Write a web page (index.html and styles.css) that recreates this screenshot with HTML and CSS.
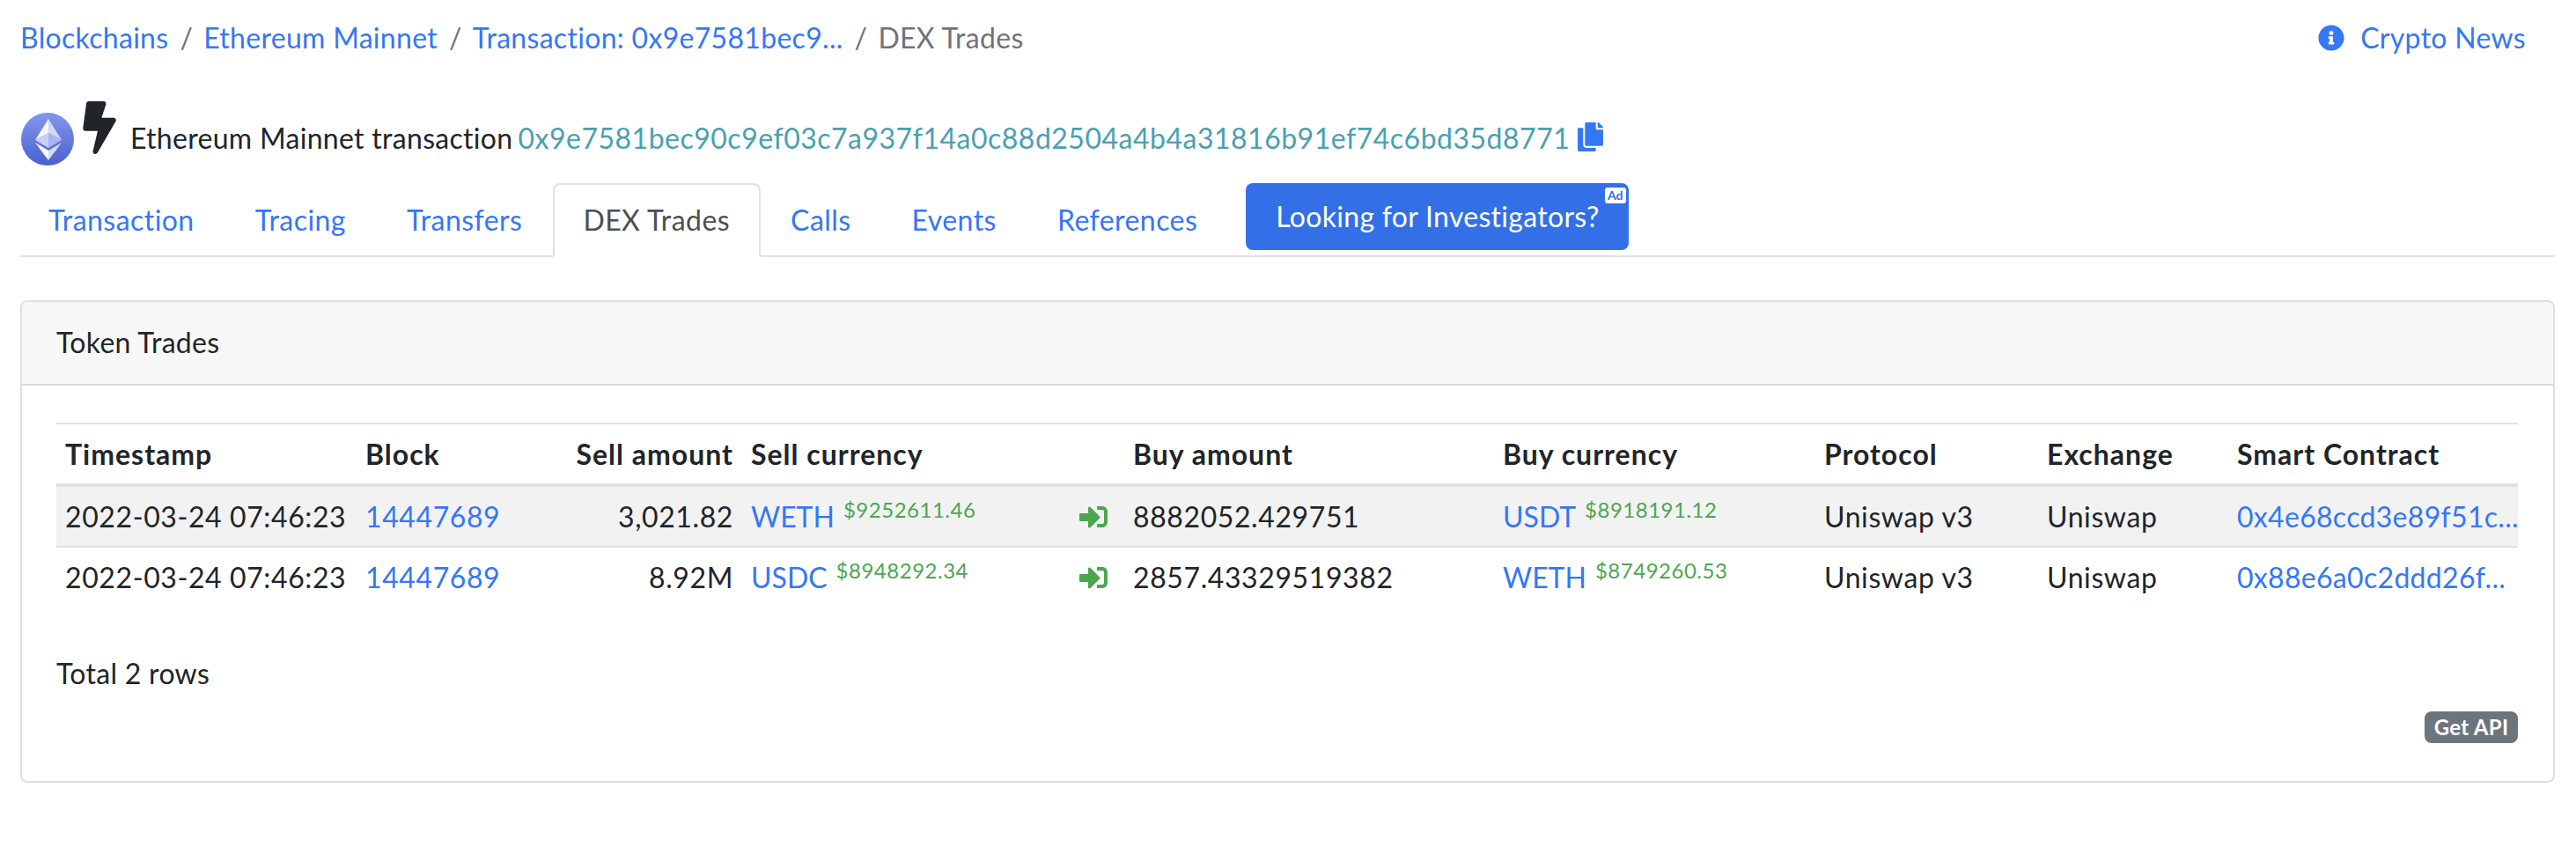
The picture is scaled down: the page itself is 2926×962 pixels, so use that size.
FILE: index.html
```html
<!DOCTYPE html>
<html>
<head>
  <meta charset="utf-8">
  <title>DEX Trades</title>
  <link rel="stylesheet" href="styles.css">
</head>
<body>
  <div class="top-row">
    <div class="breadcrumb">
      <a href="#">Blockchains</a><span class="sep">/</span><a href="#">Ethereum Mainnet</a><span class="sep">/</span><a href="#">Transaction: 0x9e7581bec9...</a><span class="sep">/</span><span class="current">DEX Trades</span>
    </div>
    <a class="news" href="#">
      <svg class="news-icon" viewBox="0 0 512 512"><path d="M256 8C119.043 8 8 119.083 8 256c0 136.997 111.043 248 248 248s248-111.003 248-248C504 119.083 392.957 8 256 8zm0 110c23.196 0 42 18.804 42 42s-18.804 42-42 42-42-18.804-42-42 18.804-42 42-42zm56 254c0 6.627-5.373 12-12 12h-88c-6.627 0-12-5.373-12-12v-24c0-6.627 5.373-12 12-12h12v-64h-12c-6.627 0-12-5.373-12-12v-24c0-6.627 5.373-12 12-12h64c6.627 0 12 5.373 12 12v100h12c6.627 0 12 5.373 12 12v24z"/></svg>
      <span>Crypto News</span>
    </a>
  </div>

  <div class="title">
    <svg class="eth-icon" viewBox="0 0 60 60">
      <defs>
        <linearGradient id="eth-bg" x1="0" y1="0" x2="0" y2="1">
          <stop offset="0" stop-color="#8497ec"/>
          <stop offset="1" stop-color="#4a5fd0"/>
        </linearGradient>
      </defs>
      <circle cx="30" cy="30" r="30" fill="url(#eth-bg)"/>
      <polygon points="31,7 16,31 31,23" fill="#f4f6fe"/>
      <polygon points="31,7 46,31 31,23" fill="#cfd6f7"/>
      <polygon points="16,31 31,23 31,40" fill="#c9d1f6"/>
      <polygon points="46,31 31,23 31,40" fill="#a9b5f0"/>
      <polygon points="16,34 31,43 31,54" fill="#fbfcff"/>
      <polygon points="46,34 31,43 31,54" fill="#d5dbf8"/>
    </svg>
    <svg class="bolt-icon" viewBox="0 0 320 512"><path d="M296 160H180.6l42.6-129.8C227.2 15 215.7 0 200 0H56C44 0 33.8 8.9 32.2 20.8l-32 240C-1.7 275.2 9.5 288 24 288h118.7L96.6 482.5c-3.6 15.2 8 29.5 23.3 29.5 8.4 0 16.4-4.4 20.8-12l176-304c9.3-15.9-2.2-36-20.7-36z"/></svg>
    <span class="title-text">Ethereum Mainnet transaction</span>
    <a class="tx-hash" href="#">0x9e7581bec90c9ef03c7a937f14a0c88d2504a4b4a31816b91ef74c6bd35d8771</a>
    <svg class="copy-icon" viewBox="0 0 448 512"><path d="M320 448v40c0 13.255-10.745 24-24 24H24c-13.255 0-24-10.745-24-24V120c0-13.255 10.745-24 24-24h72v296c0 30.879 25.121 56 56 56h168zm0-344V0H152c-13.255 0-24 10.745-24 24v368c0 13.255 10.745 24 24 24h272c13.255 0 24-10.745 24-24V128H344c-13.2 0-24-10.8-24-24zm120.971-31.029L375.029 7.029A24 24 0 0 0 358.059 0H352v96h96v-6.059a24 24 0 0 0-7.029-16.97z"/></svg>
  </div>

  <div class="tabs">
    <a class="tab" href="#">Transaction</a>
    <a class="tab" href="#">Tracing</a>
    <a class="tab" href="#">Transfers</a>
    <a class="tab active" href="#">DEX Trades</a>
    <a class="tab" href="#">Calls</a>
    <a class="tab" href="#">Events</a>
    <a class="tab" href="#">References</a>
    <a class="ad-button" href="#">Looking for Investigators?<span class="ad-badge">Ad</span></a>
  </div>

  <div class="card">
    <div class="card-header">Token Trades</div>
    <div class="card-body">
      <table class="trades">
        <colgroup>
          <col class="c-time"><col class="c-block"><col class="c-sell"><col class="c-sellcur"><col class="c-arrow"><col class="c-buy"><col class="c-buycur"><col class="c-proto"><col class="c-exch"><col class="c-contract">
        </colgroup>
        <thead>
          <tr>
            <th>Timestamp</th>
            <th>Block</th>
            <th class="num">Sell amount</th>
            <th>Sell currency</th>
            <th></th>
            <th>Buy amount</th>
            <th>Buy currency</th>
            <th>Protocol</th>
            <th>Exchange</th>
            <th>Smart Contract</th>
          </tr>
        </thead>
        <tbody>
          <tr class="hover">
            <td>2022-03-24 07:46:23</td>
            <td><a href="#">14447689</a></td>
            <td class="num">3,021.82</td>
            <td><a class="token" href="#">WETH</a><sup class="price">$9252611.46</sup></td>
            <td><svg class="arrow" viewBox="0 0 512 512"><path d="M416 448h-84c-6.6 0-12-5.4-12-12v-40c0-6.6 5.4-12 12-12h84c17.7 0 32-14.3 32-32V160c0-17.7-14.3-32-32-32h-84c-6.6 0-12-5.4-12-12V76c0-6.6 5.4-12 12-12h84c53 0 96 43 96 96v192c0 53-43 96-96 96zm-47-201L201 79c-15-15-41-4.5-41 17v96H24c-13.3 0-24 10.7-24 24v96c0 13.3 10.7 24 24 24h136v96c0 21.5 26 32 41 17l168-168c9.3-9.4 9.3-24.6 0-34z"/></svg></td>
            <td>8882052.429751</td>
            <td><a class="token" href="#">USDT</a><sup class="price">$8918191.12</sup></td>
            <td>Uniswap v3</td>
            <td>Uniswap</td>
            <td><a class="contract" href="#">0x4e68ccd3e89f51c...</a></td>
          </tr>
          <tr>
            <td>2022-03-24 07:46:23</td>
            <td><a href="#">14447689</a></td>
            <td class="num">8.92M</td>
            <td><a class="token" href="#">USDC</a><sup class="price">$8948292.34</sup></td>
            <td><svg class="arrow" viewBox="0 0 512 512"><path d="M416 448h-84c-6.6 0-12-5.4-12-12v-40c0-6.6 5.4-12 12-12h84c17.7 0 32-14.3 32-32V160c0-17.7-14.3-32-32-32h-84c-6.6 0-12-5.4-12-12V76c0-6.6 5.4-12 12-12h84c53 0 96 43 96 96v192c0 53-43 96-96 96zm-47-201L201 79c-15-15-41-4.5-41 17v96H24c-13.3 0-24 10.7-24 24v96c0 13.3 10.7 24 24 24h136v96c0 21.5 26 32 41 17l168-168c9.3-9.4 9.3-24.6 0-34z"/></svg></td>
            <td>2857.43329519382</td>
            <td><a class="token" href="#">WETH</a><sup class="price">$8749260.53</sup></td>
            <td>Uniswap v3</td>
            <td>Uniswap</td>
            <td><a class="contract" href="#">0x88e6a0c2ddd26f...</a></td>
          </tr>
        </tbody>
      </table>
      <div class="total">Total 2 rows</div>
      <div class="api-row"><a class="api-badge" href="#">Get API</a></div>
    </div>
  </div>
</body>
</html>
```

FILE: styles.css
```css
* {
  box-sizing: border-box;
}
body {
  margin: 0;
  padding: 0 24px 0 23px;
  background: #fff;
  color: #212529;
  font: 32px/48px Lato, "Noto Sans", sans-serif;
  letter-spacing: 0.3px;
}
a {
  color: #3577f6;
  text-decoration: none;
}

/* breadcrumb */
.top-row {
  display: flex;
  justify-content: space-between;
  padding: 19px 33px 0 0;
}
.breadcrumb {
  display: flex;
}
.sep {
  padding: 0 12px 0 13px;
  color: #6c757d;
}
.current {
  color: #6c757d;
}
.news {
  display: flex;
  align-items: center;
  gap: 18px;
}
.news-icon {
  width: 30px;
  height: 30px;
  fill: #3577f6;
}

/* title */
.title {
  display: flex;
  align-items: flex-start;
  height: 76px;
  margin-top: 47px;
}
.eth-icon {
  width: 60px;
  height: 60px;
  margin: 14px 0 0 1px;
  flex: none;
}
.bolt-icon {
  width: 38px;
  height: 60px;
  margin: 1px 0 0 10px;
  fill: #212529;
  flex: none;
}
.title-text {
  margin: 19px 6px 0 16px;
}
.tx-hash {
  margin-top: 19px;
  color: #4aa0b0;
  letter-spacing: 0.5px;
}
.copy-icon {
  width: 29px;
  height: 33px;
  margin: 25px 0 0 9px;
  fill: #3577f6;
}

/* tabs */
.tabs {
  display: flex;
  align-items: flex-start;
  margin-top: 18px;
  border-bottom: 2px solid #dee2e6;
}
.tab {
  height: 84px;
  margin-bottom: -2px;
  padding: 16px 33px 0 32px;
  border: 2px solid transparent;
  border-radius: 8px 8px 0 0;
  letter-spacing: 0.45px;
}
.tab:first-child {
  margin-left: -2px;
}
.tab.active {
  border-color: #dee2e6 #dee2e6 #fff;
  background: #fff;
  color: #495057;
}
.ad-button {
  position: relative;
  height: 76px;
  margin-left: 20px;
  padding: 14px 33px 0 34px;
  border-radius: 8px;
  background: #3370e8;
  color: #fff;
}
.ad-badge {
  position: absolute;
  top: 5px;
  right: 3px;
  width: 24px;
  height: 18px;
  border-radius: 3px;
  background: #fff;
  color: #3370e8;
  font-size: 14px;
  font-weight: 700;
  line-height: 18px;
  letter-spacing: 0;
  text-align: center;
}

/* card */
.card {
  margin-top: 49px;
  border: 2px solid #dfdfdf;
  border-radius: 8px;
}
.card-header {
  height: 95px;
  padding: 22px 39px 0;
  border-bottom: 2px solid #d9d9d9;
  border-radius: 6px 6px 0 0;
  background: #f7f7f7;
}
.card-body {
  padding: 42px 40px 43px 39px;
}
.trades {
  width: 2796px;
  border-collapse: separate;
  border-spacing: 0;
  table-layout: fixed;
}
.c-time { width: 341px; }
.c-block { width: 224px; }
.c-sell { width: 214px; }
.c-sellcur { width: 373px; }
.c-arrow { width: 61px; }
.c-buy { width: 420px; }
.c-buycur { width: 365px; }
.c-proto { width: 253px; }
.c-exch { width: 216px; }
.c-contract { width: 329px; }
.trades th,
.trades td {
  padding: 0 10px;
  text-align: left;
  white-space: nowrap;
  vertical-align: middle;
}
.trades th {
  height: 73px;
  border-top: 2px solid #dee2e6;
  border-bottom: 4px solid #dee2e6;
  font-weight: 700;
  letter-spacing: 1px;
}
.trades td {
  height: 68px;
  letter-spacing: 0.6px;
}
.trades .num {
  text-align: right;
}
.token {
  letter-spacing: 0;
}
.contract {
  letter-spacing: 0.3px;
}
.trades .hover td {
  height: 69px;
  border-bottom: 2px solid #dee2e6;
  background: #f2f2f2;
}
.price {
  margin-left: 10px;
  color: #4ca64f;
  font-size: 24px;
  line-height: 0;
  letter-spacing: 0.5px;
  vertical-align: 11px;
}
.arrow {
  display: block;
  width: 32px;
  height: 32px;
  fill: #4ca64f;
}
.total {
  margin-top: 51px;
}
.api-row {
  display: flex;
  justify-content: flex-end;
  margin-top: 19px;
}
.api-badge {
  width: 106px;
  height: 36px;
  border-radius: 8px;
  background: #6c757d;
  color: #fff;
  font-size: 24px;
  font-weight: 700;
  line-height: 36px;
  text-align: center;
}
```
